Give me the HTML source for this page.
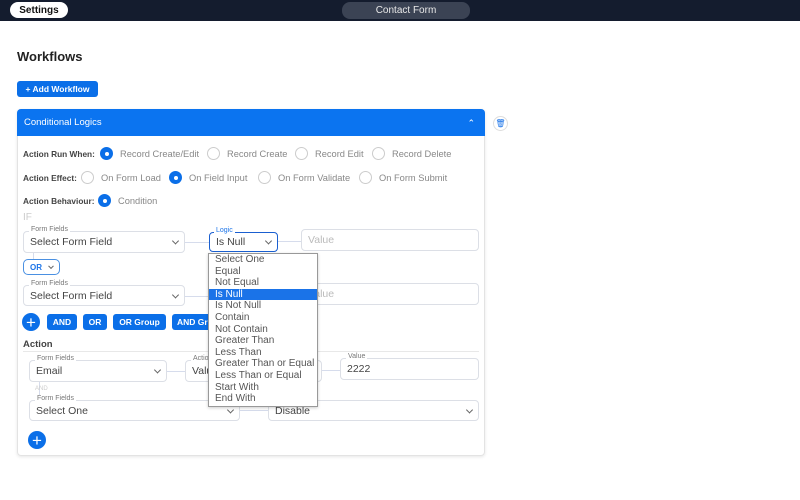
<!DOCTYPE html>
<html><head><style>
*{box-sizing:border-box;margin:0;padding:0}
body{width:800px;height:500px;background:#fff;font-family:"Liberation Sans",sans-serif;position:relative;overflow:hidden;color:#333}
.a{position:absolute}
.top{left:0;top:0;width:800px;height:21px;background:#141c2e}
.box{position:absolute;border:1px solid #dcdfe6;border-radius:4px;background:#fff;font-size:10.5px;color:#444;padding-left:6px;display:flex;align-items:center}
.lab{position:absolute;font-size:7px;color:#777;background:#fff;padding:0 2px}
.chev{position:absolute;right:6px;top:50%;width:5px;height:5px;border-right:1px solid #666;border-bottom:1px solid #666;transform:translateY(-70%) rotate(45deg)}
.rad{position:absolute;width:13px;height:13px;border-radius:50%;border:1px solid #ccc;background:#fff}
.rad.on{background:#0b6fe8;border-color:#0b6fe8}
.rad.on::after{content:"";position:absolute;left:3.5px;top:3.5px;width:4px;height:4px;border-radius:50%;background:#fff}
.t{position:absolute;font-size:9.3px;color:#888;white-space:nowrap}
.b{position:absolute;font-size:8.3px;color:#444;font-weight:bold;white-space:nowrap}
.btn{position:absolute;background:#0b6fe8;color:#fff;font-size:8.5px;font-weight:bold;border-radius:3px;height:16px;display:flex;align-items:center;justify-content:center}
.plus{position:absolute;width:18px;height:18px;border-radius:50%;background:#0b6fe8;color:#fff;font-size:17px;display:flex;align-items:center;justify-content:center;line-height:1}
.ln{position:absolute;background:#d6dcec}
.dd{position:absolute;left:208px;top:253px;width:110px;height:154px;border:1px solid #999;background:#fff;box-shadow:0 1px 3px rgba(0,0,0,.2);font-size:10px;color:#555}
.dd div{height:11.6px;line-height:11.6px;padding-left:6px;white-space:nowrap}
.dd .s{background:#1a73e8;color:#fff}
</style></head><body>
<div class="a top"></div>
<div class="a" style="left:10px;top:2px;width:58px;height:16px;background:#fff;border-radius:8px;font-size:10px;font-weight:bold;display:flex;align-items:center;justify-content:center;color:#111">Settings</div>
<div class="a" style="left:342px;top:2px;width:128px;height:17px;background:#3b4354;border-radius:8px;font-size:10px;display:flex;align-items:center;justify-content:center;color:#e8e8e8">Contact Form</div>
<div class="a" style="left:17px;top:49px;font-size:13px;font-weight:bold;color:#222">Workflows</div>
<div class="btn" style="left:17px;top:81px;width:81px;height:16px;font-size:8.5px">+ Add Workflow</div>
<div class="a" style="left:17px;top:109px;width:468px;height:347px;border:1px solid #e3e3e3;border-radius:4px;box-shadow:0 1px 3px rgba(0,0,0,.1)"></div>
<div class="a" style="left:17px;top:109px;width:468px;height:27px;background:#0b74f0;border-radius:4px 4px 0 0;color:#fff;font-size:9.5px;line-height:27px;padding-left:7px">Conditional Logics<span style="position:absolute;right:10px;top:1px;font-size:9px">&#8963;</span></div>
<div class="a" style="left:493px;top:116px;width:15px;height:15px;border-radius:50%;border:1px solid #ddd;font-size:8px;color:#1a73e8;text-align:center;line-height:13px">&#128465;</div>

<div class="b" style="left:23px;top:149px">Action Run When:</div>
<div class="rad on" style="left:100px;top:147px"></div><div class="t" style="left:120px;top:149px">Record Create/Edit</div>
<div class="rad" style="left:207px;top:147px"></div><div class="t" style="left:227px;top:149px">Record Create</div>
<div class="rad" style="left:295px;top:147px"></div><div class="t" style="left:315px;top:149px">Record Edit</div>
<div class="rad" style="left:372px;top:147px"></div><div class="t" style="left:392px;top:149px">Record Delete</div>

<div class="b" style="left:23px;top:173px">Action Effect:</div>
<div class="rad" style="left:81px;top:171px"></div><div class="t" style="left:101px;top:173px">On Form Load</div>
<div class="rad on" style="left:169px;top:171px"></div><div class="t" style="left:189px;top:173px">On Field Input</div>
<div class="rad" style="left:258px;top:171px"></div><div class="t" style="left:278px;top:173px">On Form Validate</div>
<div class="rad" style="left:359px;top:171px"></div><div class="t" style="left:379px;top:173px">On Form Submit</div>

<div class="b" style="left:23px;top:196px">Action Behaviour:</div>
<div class="rad on" style="left:98px;top:194px"></div><div class="t" style="left:118px;top:196px">Condition</div>
<div class="a" style="left:23px;top:212px;font-size:10px;color:#ccc">IF</div>

<div class="ln" style="left:185px;top:242px;width:24px;height:1px"></div>
<div class="ln" style="left:278px;top:241px;width:23px;height:1px"></div>
<div class="ln" style="left:33px;top:253px;width:1px;height:6px"></div>
<div class="box" style="left:23px;top:231px;width:162px;height:22px">Select Form Field<i class="chev"></i></div>
<div class="lab" style="left:29px;top:226px">Form Fields</div>
<div class="box" style="left:209px;top:232px;width:69px;height:20px;border:1.5px solid #1a5fd0">Is Null<i class="chev"></i></div>
<div class="lab" style="left:214px;top:227px;color:#1a73e8">Logic</div>
<div class="box" style="left:301px;top:229px;width:178px;height:22px;color:#bbb">Value</div>
<div class="box" style="left:23px;top:259px;width:37px;height:16px;border-color:#4a90e2;border-radius:5px;font-size:8px;font-weight:bold;color:#1a73e8">OR<i class="chev" style="width:4px;height:4px"></i></div>
<div class="ln" style="left:185px;top:296px;width:24px;height:1px"></div>
<div class="box" style="left:23px;top:285px;width:162px;height:21px">Select Form Field<i class="chev"></i></div>
<div class="lab" style="left:29px;top:280px">Form Fields</div>
<div class="box" style="left:301px;top:283px;width:178px;height:22px;color:#bbb">Value</div>

<div class="plus" style="left:22px;top:313px">+</div>
<div class="btn" style="left:47px;top:314px;width:30px">AND</div>
<div class="btn" style="left:83px;top:314px;width:24px">OR</div>
<div class="btn" style="left:113px;top:314px;width:53px">OR Group</div>
<div class="btn" style="left:172px;top:314px;width:45px;justify-content:flex-start;padding-left:5px">AND Gr</div>

<div class="a" style="left:23px;top:339px;font-size:9.5px;font-weight:bold;color:#444">Action</div>
<div class="ln" style="left:23px;top:351px;width:456px;height:1px;background:#e8e8e8"></div>
<div class="ln" style="left:167px;top:371px;width:18px;height:1px"></div>
<div class="ln" style="left:322px;top:370px;width:18px;height:1px"></div>
<div class="ln" style="left:39px;top:382px;width:1px;height:16px"></div>
<div class="box" style="left:29px;top:360px;width:138px;height:22px">Email<i class="chev"></i></div>
<div class="lab" style="left:35px;top:355px">Form Fields</div>
<div class="box" style="left:185px;top:360px;width:137px;height:22px">Value<i class="chev"></i></div>
<div class="lab" style="left:191px;top:355px">Action</div>
<div class="box" style="left:340px;top:358px;width:139px;height:22px">2222</div>
<div class="lab" style="left:346px;top:353px">Value</div>
<div class="a" style="left:35px;top:386px;font-size:6px;color:#ccc">AND</div>
<div class="ln" style="left:240px;top:410px;width:28px;height:1px"></div>
<div class="box" style="left:29px;top:400px;width:211px;height:21px">Select One<i class="chev"></i></div>
<div class="lab" style="left:35px;top:395px">Form Fields</div>
<div class="box" style="left:268px;top:400px;width:211px;height:21px">Disable<i class="chev"></i></div>
<div class="plus" style="left:28px;top:431px">+</div>

<div class="dd">
<div>Select One</div><div>Equal</div><div>Not Equal</div><div class="s">Is Null</div><div>Is Not Null</div><div>Contain</div><div>Not Contain</div><div>Greater Than</div><div>Less Than</div><div>Greater Than or Equal</div><div>Less Than or Equal</div><div>Start With</div><div>End With</div>
</div>
</body></html>
